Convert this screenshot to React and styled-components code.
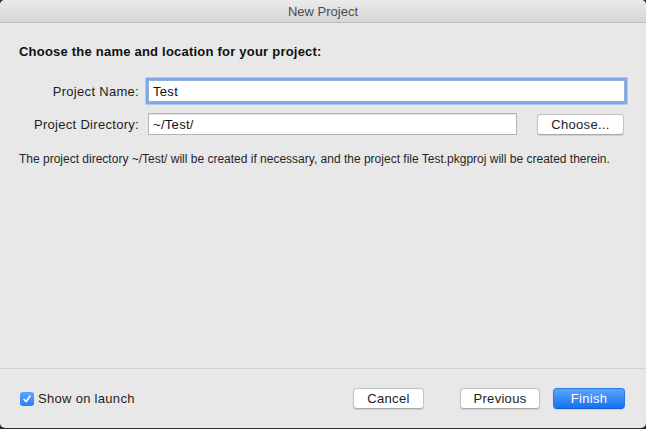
import React from 'react';
import styled, { createGlobalStyle } from 'styled-components';

const GlobalStyle = createGlobalStyle`
  html, body {
    margin: 0;
    padding: 0;
    background: #2b2b2b;
  }
  body {
    font-family: "Liberation Sans", Arial, sans-serif;
  }
`;

const Window = styled.div`
  width: 646px;
  height: 428px;
  display: flex;
  flex-direction: column;
  background: #e8e8e8;
  border-radius: 5px;
  overflow: hidden;
  color: #1e1e1e;
  letter-spacing: 0.3px;
`;

const TitleBar = styled.div`
  height: 22px;
  flex: none;
  display: flex;
  align-items: center;
  justify-content: center;
  background: linear-gradient(#ebebeb, #d5d5d5);
  border-bottom: 1px solid #bdbdbd;
  font-size: 13px;
  letter-spacing: 0;
  color: #4c4c4c;
`;

const Content = styled.div`
  flex: 1;
  padding: 21px 19px 0;
`;

const Heading = styled.h1`
  margin: 0 0 20px;
  font-size: 13px;
  line-height: 16px;
  font-weight: bold;
  letter-spacing: 0.22px;
  color: #111;
`;

const FormRow = styled.div`
  display: flex;
  align-items: center;
  margin-bottom: ${(p) => p.$gap || 0}px;
`;

const Label = styled.label`
  width: 120px;
  margin-right: 9px;
  flex: none;
  text-align: right;
  font-size: 13px;
  color: #1e1e1e;
`;

const TextField = styled.div`
  height: 22px;
  box-sizing: border-box;
  width: ${(p) => p.$width}px;
  display: flex;
  align-items: center;
  padding: 0 4px;
  background: #fff;
  border: 1px solid ${(p) => (p.$focused ? '#8fb1e0' : '#b4b4b4')};
  box-shadow: ${(p) =>
    p.$focused ? '0 0 0 2.5px #80a8e6' : 'inset 0 1px 0 #e6e6e6'};
  font-size: 13px;
  color: #111;
`;

const PushButton = styled.button`
  height: 21px;
  width: ${(p) => p.$width}px;
  box-sizing: border-box;
  padding: 0;
  border-radius: 4px;
  font-family: inherit;
  font-size: 13px;
  letter-spacing: 0.3px;
  background: ${(p) =>
    p.$primary ? 'linear-gradient(#5aa6fb, #1670f2)' : '#fff'};
  color: ${(p) => (p.$primary ? '#fff' : '#222')};
  border: 1px solid ${(p) => (p.$primary ? '#2a78e8' : '#c4c4c4')};
  border-bottom-color: ${(p) => (p.$primary ? '#1560d0' : '#aaa')};
  box-shadow: 0 0.5px 1px rgba(0, 0, 0, 0.12);
  margin-left: ${(p) => p.$ml || 0}px;
`;

const Note = styled.p`
  margin: 17px 0 0;
  font-size: 12px;
  line-height: 14px;
  letter-spacing: 0;
  color: #262626;
`;

const Footer = styled.div`
  height: 59px;
  flex: none;
  border-top: 1px solid #d2d2d2;
  display: flex;
  align-items: center;
  padding: 0 21px 0 20px;
`;

const CheckRow = styled.label`
  display: flex;
  align-items: center;
  gap: 4px;
  font-size: 13px;
  color: #1e1e1e;
  margin-right: auto;
`;

const CheckBox = styled.span`
  width: 14px;
  height: 14px;
  border-radius: 3px;
  background: linear-gradient(#5aa4fb, #2a7ef5);
  display: flex;
  align-items: center;
  justify-content: center;
`;

export default function App() {
  return (
    <>
      <GlobalStyle />
      <Window>
        <TitleBar>New Project</TitleBar>
        <Content>
          <Heading>Choose the name and location for your project:</Heading>
          <FormRow $gap={11}>
            <Label>Project Name:</Label>
            <TextField $width={477} $focused>
              Test
            </TextField>
          </FormRow>
          <FormRow>
            <Label>Project Directory:</Label>
            <TextField $width={369}>~/Test/</TextField>
            <PushButton $width={87} $ml={20}>
              Choose...
            </PushButton>
          </FormRow>
          <Note>
            The project directory ~/Test/ will be created if necessary, and the
            project file Test.pkgproj will be created therein.
          </Note>
        </Content>
        <Footer>
          <CheckRow>
            <CheckBox>
              <svg width="10" height="10" viewBox="0 0 10 10">
                <path
                  d="M2 5.3 L4.2 7.6 L8 2"
                  fill="none"
                  stroke="#fff"
                  strokeWidth="1.6"
                  strokeLinecap="round"
                  strokeLinejoin="round"
                />
              </svg>
            </CheckBox>
            Show on launch
          </CheckRow>
          <PushButton $width={71}>Cancel</PushButton>
          <PushButton $width={80} $ml={36}>
            Previous
          </PushButton>
          <PushButton $width={72} $ml={13} $primary>
            Finish
          </PushButton>
        </Footer>
      </Window>
    </>
  );
}
